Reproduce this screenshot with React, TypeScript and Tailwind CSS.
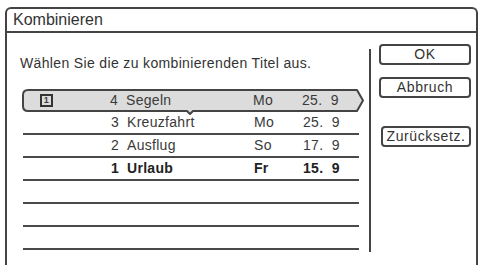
import React from 'react';

type Row = { num: string; name: string; day: string; date: string; bold?: boolean };

const rows: Row[] = [
  { num: '4', name: 'Segeln', day: 'Mo', date: '25.  9' },
  { num: '3', name: 'Kreuzfahrt', day: 'Mo', date: '25.  9' },
  { num: '2', name: 'Ausflug', day: 'So', date: '17.  9' },
  { num: '1', name: 'Urlaub', day: 'Fr', date: '15.  9', bold: true },
];

const RowCells: React.FC<{ row?: Row; icon?: boolean }> = ({ row, icon }) => (
  <div className={`flex items-center h-full pl-[18px] text-[14px] tracking-[0.3px] ${row?.bold ? 'font-bold text-[#222]' : 'text-[#3a3a3a]'}`}>
    <div className="w-[13px] h-[13px] flex items-center justify-center">
      {icon && (
        <div className="w-[13px] h-[13px] border-2 border-[#333] flex items-center justify-center text-[9px] font-bold leading-none">
          1
        </div>
      )}
    </div>
    <span className="w-[65px] text-right">{row?.num}</span>
    <span className="ml-[8px] w-[127px]">{row?.name}</span>
    <span className="w-[49px]">{row?.day}</span>
    <span className="whitespace-pre">{row?.date}</span>
  </div>
);

const Button: React.FC<{ label: string; className?: string }> = ({ label, className }) => (
  <div
    className={`h-[21px] border-2 border-[#444] rounded-[4px] flex items-center justify-center text-[14px] tracking-[0.6px] text-[#333] ${className ?? ''}`}
  >
    {label}
  </div>
);

export default function App() {
  return (
    <div
      className="w-[479px] h-[265px] bg-white overflow-hidden pt-[7px] pl-[5px]"
      style={{ fontFamily: '"Liberation Sans", Arial, sans-serif' }}
    >
      <div className="w-[473px] h-[258px] border-2 border-b-0 border-[#444] rounded-t-[6px] flex flex-col">
        {/* Title */}
        <div className="h-[24px] border-b-2 border-[#444] pl-[6px] flex items-center text-[16px] text-[#333]">
          Kombinieren
        </div>

        <div className="flex flex-1">
          {/* Left panel */}
          <div className="w-[362px] flex flex-col">
            <div className="mt-[22px] ml-[13px] text-[14px] tracking-[0.35px] text-[#333] leading-[16px]">
              Wählen Sie die zu kombinierenden Titel aus.
            </div>
            <div className="mt-[18px] ml-[15px] w-[337px] flex flex-col">
              {/* Selected row */}
              <div className="relative h-[23px]">
                <svg className="absolute left-0 top-0" width="345" height="28" viewBox="0 0 345 28">
                  <path
                    d="M6 1 H335 L341 11.5 L335 22 H171 L168 25 L165 22 H6 Q1 22 1 17 V6 Q1 1 6 1 Z"
                    fill="#dcdcdc"
                    stroke="#444"
                    strokeWidth="2"
                    strokeLinejoin="round"
                  />
                </svg>
                <div className="relative h-full">
                  <RowCells row={rows[0]} icon />
                </div>
              </div>
              {rows.slice(1).map((r) => (
                <div key={r.num} className="h-[23px] border-b-2 border-[#4a4a4a] ml-[1px]">
                  <RowCells row={r} />
                </div>
              ))}
              {[0, 1, 2].map((i) => (
                <div key={i} className="h-[23px] border-b-2 border-[#4a4a4a] ml-[1px]" />
              ))}
            </div>
          </div>

          {/* Separator */}
          <div className="mt-[16px] h-[203px] w-[2px] bg-[#444]" />

          {/* Buttons */}
          <div className="flex flex-col ml-[8px] mt-[11px] w-[92px]">
            <Button label="OK" />
            <Button label="Abbruch" className="mt-[12px]" />
            <Button label="Zurücksetz." className="mt-[28px] ml-[2px]" />
          </div>
        </div>
      </div>
    </div>
  );
}
